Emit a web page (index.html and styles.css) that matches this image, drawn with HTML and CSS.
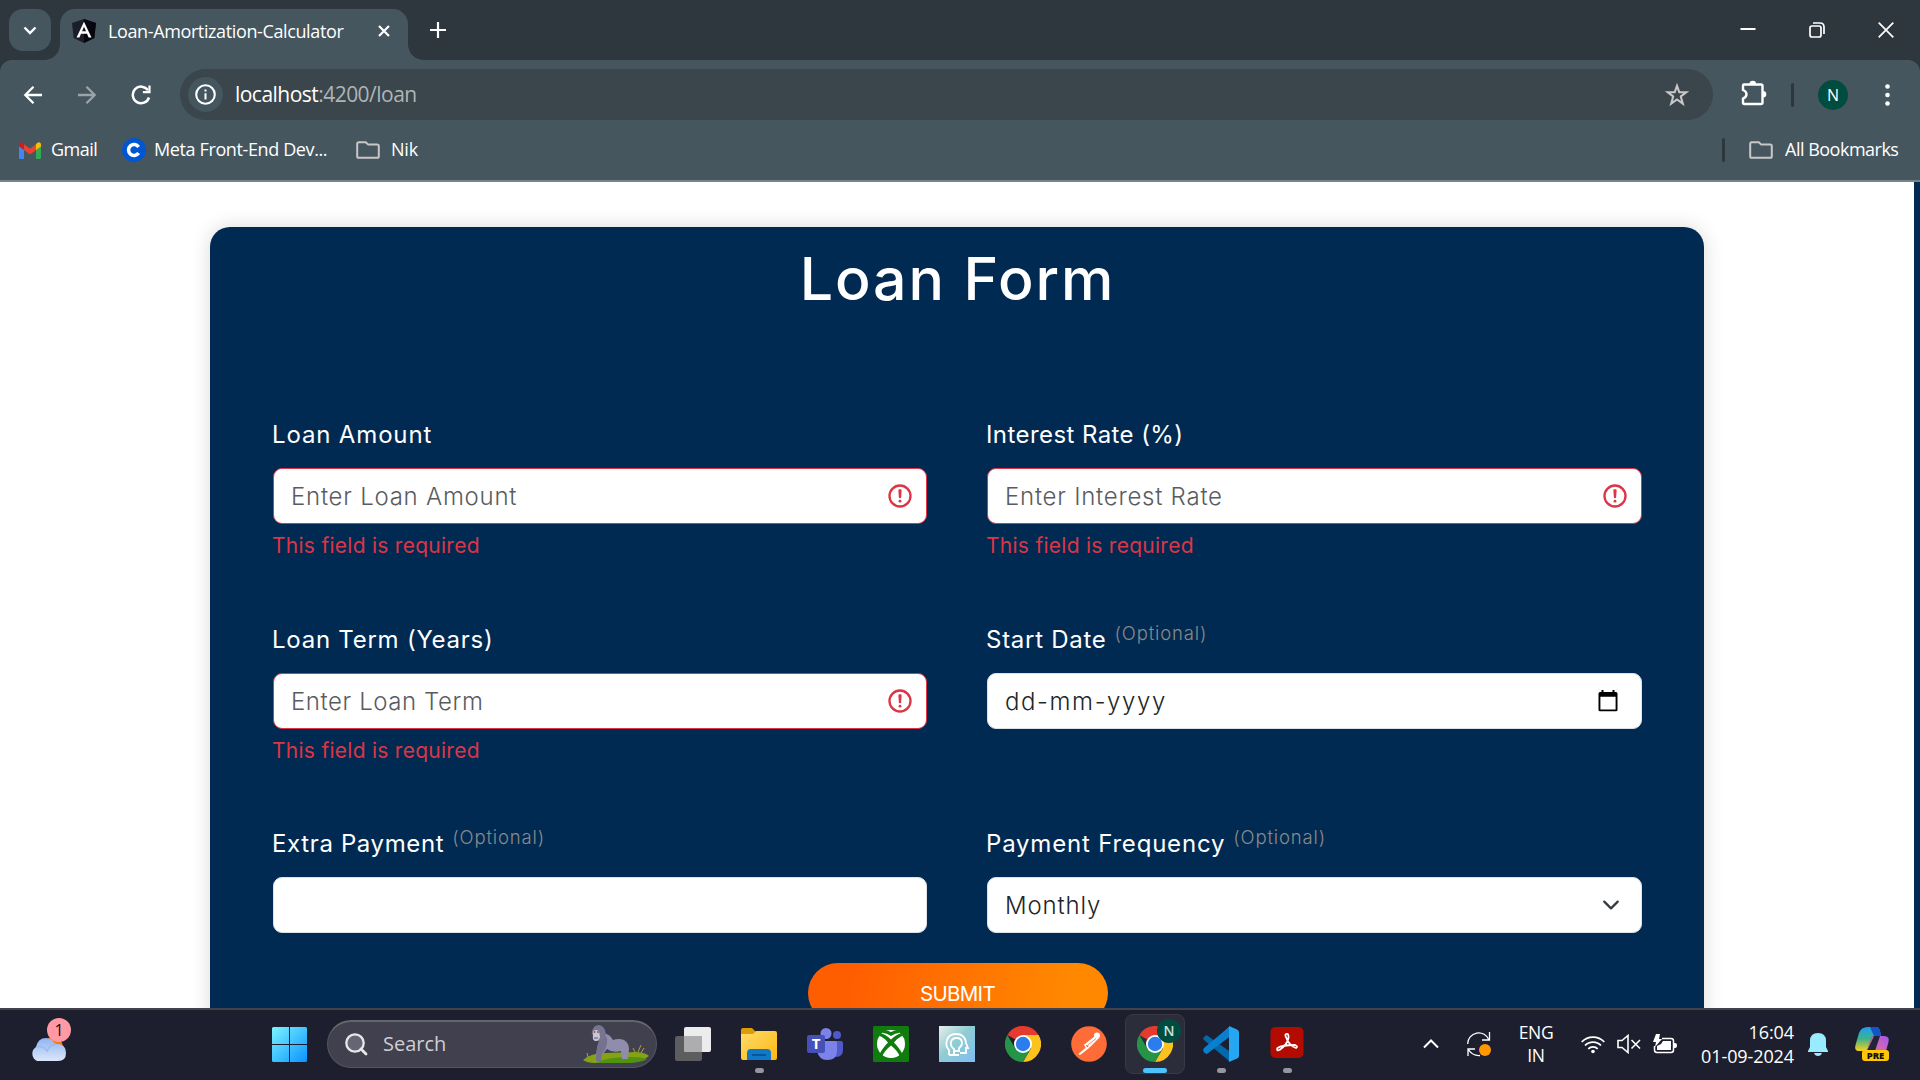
FILE: index.html
```html
<!DOCTYPE html>
<html lang="en">
<head>
<meta charset="utf-8">
<title>Loan-Amortization-Calculator</title>
<link rel="stylesheet" href="styles.css">
</head>
<body>
<svg width="0" height="0" class="defs" aria-hidden="true">
  <defs>
    <linearGradient id="win" x1="0" y1="0" x2="1" y2="1"><stop offset="0" stop-color="#7bf4ff"/><stop offset="1" stop-color="#0a93ff"/></linearGradient>
    <linearGradient id="cloud" x1="0" y1="0" x2="0" y2="1"><stop offset="0" stop-color="#8fb4f4"/><stop offset="1" stop-color="#dbe7f8"/></linearGradient>
    <linearGradient id="fold" x1="0" y1="0" x2="1" y2="1"><stop offset="0" stop-color="#ffdc6b"/><stop offset="1" stop-color="#fcb712"/></linearGradient>
    <linearGradient id="headbg" x1="0" y1="0" x2="1" y2="1"><stop offset="0" stop-color="#e9eeee"/><stop offset=".45" stop-color="#8fcdd2"/><stop offset="1" stop-color="#7fbdf5"/></linearGradient>
    <linearGradient id="copA" x1="0" y1="0" x2="0" y2="1"><stop offset="0" stop-color="#1f9df0"/><stop offset=".5" stop-color="#3fb389"/><stop offset="1" stop-color="#ffcf1a"/></linearGradient>
    <linearGradient id="copB" x1="1" y1="0" x2="0" y2="1"><stop offset="0" stop-color="#a457f0"/><stop offset="1" stop-color="#ff7a6b"/></linearGradient>
    <symbol id="chrome" viewBox="0 0 36 36">
      <path d="M18 18L2.4 9A18 18 0 0 1 33.6 9Z" fill="#e33b2e"/>
      <path d="M18 9H33.6A18 18 0 0 1 18 36L25.8 22.5Z" fill="#fcc31e"/>
      <path d="M2.4 9A18 18 0 0 0 18 36L25.8 22.5L18 24L10.2 22.5Z" fill="#269447"/>
      <circle cx="18" cy="18" r="9" fill="#fff"/><circle cx="18" cy="18" r="7.2" fill="#2b7cec"/>
    </symbol>
    <symbol id="folder" viewBox="0 0 24 18">
      <path d="M1.2 3V15.2Q1.2 16.8 2.8 16.8H21.2Q22.8 16.8 22.8 15.2V5.2Q22.8 3.6 21.2 3.6H12.2L9.8 1.2H2.8Q1.2 1.2 1.2 3Z" fill="none" stroke="#c7c7c7" stroke-width="2"/>
    </symbol>
    <symbol id="alert" viewBox="0 0 12 12">
      <g fill="none" stroke="#dc3545"><circle cx="6" cy="6" r="4.5"/><path stroke-linejoin="round" d="M5.8 3.6h.4L6 6.5z"/></g><circle cx="6" cy="8.2" r=".6" fill="#dc3545"/>
    </symbol>
  </defs>
</svg>

<header class="browser">
  <div class="titlebar">
    <button class="tab-search"><svg width="14" height="9" viewBox="0 0 14 9"><path d="M1.5 1.5L7 7L12.500 1.5" fill="none" stroke="#fff" stroke-width="2.400"/></svg></button>
    <div class="tab">
      <svg class="tab-logo" width="24" height="24" viewBox="0 0 24 24"><path d="M12 0L24 4L22.300 19L12 24L1.700 19L0 4Z" fill="#1b1d29"/><path d="M12 0L24 4L22.300 19L12 24Z" fill="#05060f"/><path d="M12 2.800L4.500 18.500H7.400L9 14.800H15L16.600 18.500H19.500ZM12 7.800L14 12.300H10Z" fill="#fff" fill-rule="evenodd"/></svg>
      <span class="tab-title">Loan-Amortization-Calculator</span>
      <svg class="tab-close" width="12" height="12" viewBox="0 0 12 12"><path d="M1 1L11 11M11 1L1 11" stroke="#fff" stroke-width="2.200"/></svg>
    </div>
    <svg class="new-tab" width="16" height="16" viewBox="0 0 16 16"><path d="M8 0V16M0 8H16" stroke="#fff" stroke-width="2.200"/></svg>
    <div class="window-buttons">
      <svg width="16" height="16" viewBox="0 0 16 16"><path d="M.5 7H15.500" stroke="#fff" stroke-width="2"/></svg>
      <svg width="16" height="16" viewBox="0 0 16 16" fill="none" stroke="#fff" stroke-width="1.700"><rect x="1" y="4" width="11" height="11" rx="2"/><path d="M4 1H11Q15 1 15 5V12"/></svg>
      <svg width="16" height="16" viewBox="0 0 16 16"><path d="M.7.7L15.300 15.300M15.300.7L.7 15.300" stroke="#fff" stroke-width="1.700"/></svg>
    </div>
  </div>
  <div class="chrome-body">
    <div class="toolbar">
      <svg class="nav" width="20" height="20" viewBox="0 0 20 20"><path d="M19 10H3M10.500 1.800L2.300 10L10.500 18.200" fill="none" stroke="#fff" stroke-width="2.300"/></svg>
      <svg class="nav nav-off" width="20" height="20" viewBox="0 0 20 20"><path d="M1 10H17M9.500 1.800L17.700 10L9.500 18.200" fill="none" stroke="#9aa4a9" stroke-width="2.300"/></svg>
      <svg class="nav" width="20" height="20" viewBox="0 0 20 20"><path d="M17 5.300A8.300 8.300 0 1 0 18 12.500" fill="none" stroke="#fff" stroke-width="2.500"/><path d="M19.600.6V8.300H11.900V6.100H17.400V.6Z" fill="#fff"/></svg>
      <div class="omnibox">
        <span class="info"><svg width="21" height="21" viewBox="0 0 21 21"><circle cx="10.500" cy="10.500" r="9.300" fill="none" stroke="#fff" stroke-width="2.100"/><path d="M10.500 9.300V15.500M10.500 5.500V7.600" stroke="#fff" stroke-width="2"/></svg></span>
        <span class="url"><b>localhost</b>:4200/loan</span>
        <svg class="star" width="24" height="24" viewBox="0 0 24 24"><path d="M12 2.800L14.300 9.300H21.200L15.800 13.500L17.800 20.600L12 16.500L6.200 20.600L8.200 13.500L2.800 9.300H9.700Z" fill="none" stroke="#c7c7c7" stroke-width="2.100"/></svg>
      </div>
      <svg class="puzzle" width="26" height="26" viewBox="0 0 26 26"><path d="M3 4.500H20Q21.500 4.500 21.500 6V22.500Q21.500 24 20 24H3.500Q2 24 2 22.500V18.500Q5.500 17 5.500 14.200Q5.500 11.500 2 10V5.500Q2 4.500 3 4.500Z" fill="none" stroke="#fff" stroke-width="2.400"/><path d="M8.500 4A3.300 3.300 0 0 1 15.100 4ZM22 11A3.300 3.300 0 0 1 22 17.600Z" fill="#fff"/></svg>
      <i class="divider"></i>
      <span class="avatar">N</span>
      <svg class="dots" width="5" height="22" viewBox="0 0 5 22" fill="#fff"><circle cx="2.500" cy="2.500" r="2.300"/><circle cx="2.500" cy="11" r="2.300"/><circle cx="2.500" cy="19.500" r="2.300"/></svg>
    </div>
    <div class="bookmarks">
      <span class="bookmark gmail"><svg width="22" height="17" viewBox="0 0 22 17"><path d="M0 3V15.500Q0 17 1.500 17H5V7Z" fill="#4285f4"/><path d="M17 7V17H20.500Q22 17 22 15.500V3Z" fill="#34a853"/><path d="M5 2.200L11 6.800L17 2.200V8L11 12.500L5 8Z" fill="#ea4335"/><path d="M0 3Q0 .3 2.300.3Q3.300.3 5 2V8L0 4.500Z" fill="#c5221f"/><path d="M22 3Q22 .3 19.700.3Q18.700.3 17 2V8L22 4.500Z" fill="#fbbc04"/></svg><span>Gmail</span></span>
      <span class="bookmark meta"><svg width="24" height="24" viewBox="0 0 24 24"><circle cx="12" cy="12" r="12" fill="#0056d2"/><path d="M16.600 8.900A5.500 5.500 0 1 0 16.600 15.100" fill="none" stroke="#fff" stroke-width="3.500"/></svg><span>Meta Front-End Dev...</span></span>
      <span class="bookmark nik"><svg width="24" height="18"><use href="#folder"/></svg><span>Nik</span></span>
      <i class="divider"></i>
      <span class="bookmark all"><svg width="24" height="18"><use href="#folder"/></svg><span>All Bookmarks</span></span>
    </div>
  </div>
</header>

<main class="page">
  <form class="card">
    <h1>Loan Form</h1>
    <div class="fields">
      <div class="field">
        <div class="label l1">Loan Amount</div>
        <div class="input invalid"><span class="ph p1">Enter Loan Amount</span><svg width="28" height="28"><use href="#alert"/></svg></div>
        <div class="error">This field is required</div>
      </div>
      <div class="field">
        <div class="label l2">Interest Rate (%)</div>
        <div class="input invalid"><span class="ph p2">Enter Interest Rate</span><svg width="28" height="28"><use href="#alert"/></svg></div>
        <div class="error">This field is required</div>
      </div>
      <div class="field">
        <div class="label l3">Loan Term (Years)</div>
        <div class="input invalid"><span class="ph p3">Enter Loan Term</span><svg width="28" height="28"><use href="#alert"/></svg></div>
        <div class="error">This field is required</div>
      </div>
      <div class="field">
        <div class="label"><span class="l4">Start Date</span><span class="optional">(Optional)</span></div>
        <div class="input"><span class="date">dd-mm-yyyy</span><svg class="calendar" width="20" height="22" viewBox="0 0 20 22"><path d="M3.500 0H5.500V2H14.500V0H16.500V2H18Q19.500 2 19.500 3.500V20Q19.500 21.300 18 21.300H2Q.5 21.300.5 20V3.500Q.5 2 2 2H3.500ZM2.400 6.800V19.400H17.600V6.800Z" fill-rule="evenodd"/></svg></div>
      </div>
      <div class="field">
        <div class="label"><span class="l5">Extra Payment</span><span class="optional">(Optional)</span></div>
        <div class="input"></div>
      </div>
      <div class="field">
        <div class="label"><span class="l6">Payment Frequency</span><span class="optional">(Optional)</span></div>
        <div class="input"><span class="month">Monthly</span><svg class="chevron" width="18" height="18" viewBox="0 0 16 16"><path d="M2 5l6 6 6-6" fill="none" stroke="#343a40" stroke-width="2" stroke-linecap="round" stroke-linejoin="round"/></svg></div>
      </div>
    </div>
    <button class="submit" type="button">SUBMIT</button>
  </form>
  <div class="scrollbar"></div>
</main>

<footer class="taskbar">
  <div class="weather">
    <svg width="36" height="30" viewBox="2 0 36 30"><circle cx="25" cy="15" r="10" fill="#f57c14"/><path d="M9 29A8 8 0 0 1 8 15Q10 6 18 6Q24 6 27 12Q38 11 38 21Q38 29 30 29Z" fill="url(#cloud)"/><path d="M8 15Q15 13 19 19Q22 12 28 12" fill="none" stroke="#9bbaf0" stroke-width="1.500"/></svg>
    <span class="count">1</span>
  </div>
  <svg class="start" width="35" height="35" viewBox="0 0 35 35"><path d="M0 1.500Q0 0 1.500 0H17V17H0ZM18 0H33.500Q35 0 35 1.500V17H18ZM0 18H17V35H1.500Q0 35 0 33.500ZM18 18H35V33.500Q35 35 33.500 35H18Z" fill="url(#win)"/></svg>
  <div class="search">
    <svg width="23" height="23" viewBox="0 0 23 23"><circle cx="10" cy="10" r="8.700" fill="#666573" stroke="#e8e8ea" stroke-width="2.300"/><path d="M16 16L21 21" stroke="#e8e8ea" stroke-width="2.800" stroke-linecap="round"/></svg>
    <span>Search</span>
    <svg class="gorilla" width="66" height="40" viewBox="0 0 66 40">
      <path d="M0 35Q8 28 22 28L54 27Q64 28 66 31Q58 38 42 38H12Q4 38 0 35Z" fill="#83a315"/><path d="M12 38Q24 32 46 32Q60 32 64 34Q58 38 42 38Z" fill="#4f930f"/><path d="M52 27L50 23M55 27L58 20M58 28L61 23M5 32L4 28" stroke="#b1a13f"/>
      <path d="M20 8Q27 9 30 15Q36 13 41 15Q46 18 46 24L45 34H39L38 26Q29 28 24 24L19 30L18 36H13Q13 26 15 19Z" fill="#8f8dab"/><path d="M20 9Q25 11 24 19Q23 24 19 29L18 36H13Q13 24 16 16Z" fill="#74728f"/><path d="M9 7Q10 0 16 0Q22 1 23 9Q22 16 15 16Q9 16 10 10Q8 9 9 7Z" fill="#777590"/><path d="M10 6Q13 4 16 6L17 12Q16 16 13 16Q9 16 10 10Z" fill="#c9c6d8"/><circle cx="11.500" cy="7" r=".9" fill="#a4442f"/><circle cx="15" cy="7" r=".9" fill="#a4442f"/><path d="M11 13H15" stroke="#5b5972"/>
    </svg>
  </div>
  <nav class="apps">
    <div class="app"><svg width="36" height="36" viewBox="0 0 36 36"><rect x="0" y="10" width="27" height="25" rx="2" fill="#5d5d5f"/><rect x="9" y="1" width="27" height="25" rx="2" fill="#ececed"/><path d="M9 10H27V26H11Q9 26 9 24Z" fill="#adadb0"/></svg></div>
    <div class="app run"><svg width="36" height="36" viewBox="0 0 36 36"><path d="M0 4Q0 2 2 2H11L15 6V12H0Z" fill="#dd9b06"/><path d="M0 8H12L15 5H34Q36 5 36 7V32Q36 34 34 34H2Q0 34 0 32Z" fill="url(#fold)"/><path d="M6 34V27Q6 23 10 23H26Q30 23 30 27V34Z" fill="#0f78c9"/><path d="M11 29H25" stroke="#064f8c" stroke-width="1.600"/></svg></div>
    <div class="app"><svg width="36" height="36" viewBox="0 0 36 36"><circle cx="30" cy="9" r="4" fill="#5059c9"/><path d="M24 15H34Q36 15 36 17V24Q36 31 29 31H24Z" fill="#5059c9"/><circle cx="19" cy="7.500" r="5.500" fill="#7b83eb"/><path d="M10 15H28Q30 15 30 17V25Q30 34 20 34Q12 34 10 25Z" fill="#7b83eb"/><rect x="0" y="9" width="18" height="18" rx="2" fill="#4650b8"/><text x="9" y="23" class="teams-t">T</text></svg></div>
    <div class="app"><svg width="36" height="36" viewBox="0 0 36 36"><rect width="36" height="36" rx="1.500" fill="#107c10"/><circle cx="18" cy="18" r="14" fill="#fff"/><path d="M9 7Q13 6.500 18 10Q23 6.500 27 7L24 4.800Q21 4.500 18 6Q15 4.500 12 4.800Z" fill="#107c10"/><path d="M8 7.500Q12 8 18 13.500Q24 8 28 7.500L30 10Q26 10.500 21 16.500Q28 24 29.500 28.500L27 31Q25 25 18 19.500Q11 25 9 31L6.500 28.500Q8 24 15 16.500Q10 10.500 6 10Z" fill="#107c10"/></svg></div>
    <div class="app"><svg width="36" height="36" viewBox="0 0 36 36"><rect width="36" height="36" fill="url(#headbg)"/><path d="M10 29V24Q6 20 8 14Q10 8 17 8Q26 8 27 17L29 22H27V27H21M15 28V23Q11 20 12 16Q13 12 17.500 12Q23 12 23 17Q23 20 20 22V25H15M10 29H20" fill="none" stroke="#fff" stroke-width="1.800"/></svg></div>
    <div class="app"><svg width="36" height="36"><use href="#chrome"/></svg></div>
    <div class="app"><svg width="36" height="36" viewBox="0 0 36 36"><circle cx="18" cy="18" r="17.800" fill="#ff6c37"/><circle cx="26" cy="9.500" r="3" fill="#fff"/><path d="M23 12L14 19L15.500 22L8.500 28M25 13L17 22L9 28" fill="none" stroke="#fff" stroke-width="1.600" stroke-linecap="round"/><path d="M23 11L28 12L19 21L15 18Z" fill="#fff"/><path d="M17 19L25 12.500" stroke="#ff6c37" stroke-width=".8"/></svg></div>
    <div class="app active"><svg width="36" height="36"><use href="#chrome"/></svg><span class="profile">N</span></div>
    <div class="app run"><svg width="36" height="36" viewBox="0 0 36 36"><path d="M26 1L3 22Q0 24 1 26L3.500 28L26 11Z" fill="#0a7fcd"/><path d="M3.500 9L1 11Q-.5 12.500 1 14L26 35V25Z" fill="#0069ad"/><path d="M1 22L26 1V11L5 27Q3 28.500 1 26Q-.5 24 1 22Z" fill="#0a7fcd"/><path d="M26 0L34 3.500Q36 4.500 36 6V30Q36 31.500 34 32.500L26 36Z" fill="#25a7f3"/></svg></div>
    <div class="app run"><svg width="36" height="36" viewBox="0 0 36 36"><rect x="1.500" y="1" width="33" height="31" rx="5" fill="#b30b00"/><path d="M17 8Q20 7 19.500 12Q18 19 10.500 24Q7 25 8.500 22Q13 19 26 19Q29.500 20.500 27 22Q20 20 16.500 10Q16 8.500 17 8Z" fill="none" stroke="#fff" stroke-width="1.800"/></svg></div>
  </nav>
  <div class="tray">
    <svg class="caret" width="16" height="10" viewBox="0 0 16 10"><path d="M1 8.500L8 1.500L15 8.500" fill="none" stroke="#fff" stroke-width="2"/></svg>
    <svg class="sync" width="24" height="25" viewBox="0 0 24 25"><g fill="none" stroke="#fff" stroke-width="1.300"><path d="M.7 12A11 11 0 0 1 22 8M22.500 0V8H15M1 24V17H8M1 17Q5 24 13 23.500"/></g><circle cx="18" cy="18" r="6" fill="#ff9800"/></svg>
    <div class="lang"><span>ENG</span><span>IN</span></div>
    <svg class="wifi" width="24" height="19" viewBox="0 0 24 19" fill="none" stroke="#fff" stroke-width="1.800"><path d="M.7 7A15.500 15.500 0 0 1 23.300 7M4 10.500A11 11 0 0 1 20 10.500M7.300 13.800A6.500 6.500 0 0 1 16.700 13.800"/><circle cx="12" cy="16.500" r="1.800" fill="#fff" stroke="none"/></svg>
    <svg class="speaker" width="24" height="20" viewBox="0 0 24 20" fill="none" stroke="#fff" stroke-width="1.600"><path d="M1 6.500H5L11 1.500V18.500L5 13.500H1ZM14.500 6L23 14.500M23 6L14.500 14.500"/></svg>
    <svg class="battery" width="24" height="20" viewBox="0 0 24 20"><path d="M9 4.500H18Q20.500 4.500 20.500 7V16Q20.500 18.500 18 18.500H4Q1.500 18.500 1.500 16V12" fill="none" stroke="#fff" stroke-width="1.500"/><path d="M10 7H18V16H4V12L8 10ZM21 9H22Q24 9 24 11V12Q24 14 22 14H21ZM3 0L0 8H3L2 13L9 5H6L7 0Z" fill="#fff"/></svg>
    <div class="clock"><span>16:04</span><span>01-09-2024</span></div>
    <svg class="bell" width="20" height="23" viewBox="0 0 20 23"><path d="M2 8Q2 0 10 0Q18 0 18 8V14L20 18V19H0V18L2 14ZM6 20H14Q13 23 10 23Q7 23 6 20Z" fill="#99ebff"/></svg>
    <div class="copilot">
      <svg width="36" height="36" viewBox="0 0 36 36"><path d="M14 1H22Q25 1 26 5L27 10H20Q18 10 17 13L14 22Q13 25 9 25H5Q0 25 1.500 19L5 7Q7 1 14 1Z" fill="url(#copA)"/><path d="M16 1H22Q25 1 26 5L27 10H20Z" fill="#1652c9"/><path d="M27 10H30Q36 10 34.500 16L32 25Q30 31 23 31H15Q12 31 11 27L10 25Q13 25 14 22L17 13Q18 10 20 10Z" fill="url(#copB)"/><path d="M20 10H26L21 25H13Z" fill="#23233a"/></svg>
      <span>PRE</span>
    </div>
  </div>
</footer>
</body>
</html>
```
FILE: styles.css
```css
* { box-sizing: border-box; }
body {
  margin: 0;
  width: 1920px;
  height: 1080px;
  overflow: hidden;
  display: flex;
  flex-direction: column;
  background: #fff;
  font-family: "Open Sans", "Noto Sans", sans-serif;
}
svg { display: block; flex: none; }
button { border: 0; padding: 0; font: inherit; }
.defs { position: absolute; }

/* browser window */
.browser { flex: none; height: 182px; background: #2d373d; color: #fff; }
.titlebar { height: 60px; display: flex; align-items: flex-start; padding: 9px 26px 0 9px; }
.tab-search { width: 42px; height: 42px; border-radius: 14px; background: #45565f; display: flex; align-items: center; justify-content: center; }
.tab {
  position: relative;
  width: 348px;
  height: 51px;
  margin-left: 9px;
  padding: 0 18px 8px 12px;
  background: #45565f;
  border-radius: 15px 15px 0 0;
  display: flex;
  align-items: center;
}
.tab::before, .tab::after { content: ""; position: absolute; bottom: 0; width: 15px; height: 15px; }
.tab::before { left: -15px; background: radial-gradient(circle at 0 0, transparent 14.5px, #45565f 15px); }
.tab::after { right: -15px; background: radial-gradient(circle at 100% 0, transparent 14.5px, #45565f 15px); }
.tab-title { margin-left: 12px; font-size: 18px; letter-spacing: -.38px; white-space: nowrap; line-height: 24px; }
.tab-close { margin-left: auto; }
.new-tab { margin: 13px 0 0 22px; }
.window-buttons { margin: 13px 0 0 auto; display: flex; gap: 53px; }
.chrome-body { height: 122px; background: #45565f; border-radius: 12px 12px 0 0; border-bottom: 2px solid #75858b; padding-top: 9px; }
.toolbar { height: 51px; display: flex; align-items: center; padding: 0 30px 0 23px; }
.nav { margin-right: 34px; }
.nav:nth-child(3) { margin-right: 29px; }
.omnibox { width: 1533px; height: 51px; border-radius: 26px; background: #3a454c; display: flex; align-items: center; padding: 0 24px 0 8px; }
.info { width: 35px; height: 35px; border-radius: 50%; background: #45565f; display: flex; align-items: center; justify-content: center; }
.url { margin-left: 12px; padding-bottom: 1px; font-size: 21px; color: #aeb5b8; letter-spacing: -.53px; }
.url b { font-weight: 400; color: #fff; }
.star { margin-left: auto; }
.puzzle { margin-left: 28px; margin-top: -3px; }
.toolbar .divider { margin-left: 24px; }
.divider { width: 3px; height: 24px; border-radius: 2px; background: #2d373d; }
.avatar { margin-left: 24px; width: 30px; height: 30px; border-radius: 50%; background: #004d40; font-size: 16px; line-height: 30px; text-align: center; }
.dots { margin-left: auto; }
.bookmarks { height: 60px; display: flex; align-items: center; padding: 0 21px 0 19px; }
.bookmark { display: flex; align-items: center; gap: 11px; font-size: 18px; white-space: nowrap; }
.bookmark span { padding-bottom: 2px; }
.gmail { width: 103px; letter-spacing: -.5px; gap: 10px; }
.meta { width: 234px; letter-spacing: -.38px; gap: 8px; }
.nik { gap: 11px; letter-spacing: -.2px; }
.bookmarks .divider { margin-left: auto; }
.all { margin-left: 24px; width: 150px; gap: 12px; letter-spacing: -.5px; }

/* page */
.page { flex: none; position: relative; height: 826px; overflow: hidden; background: #fff; padding: 45px 0 0 210px; font-family: Inter, sans-serif; }
.scrollbar { position: absolute; top: 0; right: 0; width: 6px; height: 100%; background: #002a52; }
.card { width: 1494px; height: 900px; padding: 20px 62px 0 63px; border-radius: 20px; background: #002a52; box-shadow: 0 0 20px rgba(0, 0, 0, .15); color: #fff; display: flex; flex-direction: column; align-items: center; }
h1 { margin: 0; height: 64px; line-height: 64px; font-size: 59px; font-weight: 500; letter-spacing: 1.9px; white-space: nowrap; }
.fields { margin-top: 106px; width: 100%; display: grid; grid-template-columns: 654px 655px; column-gap: 60px; grid-template-rows: 205px 204px 137px; }
.label { height: 36px; line-height: 36px; margin-left: -1px; font-size: 24px; display: flex; white-space: nowrap; }
.l1 { letter-spacing: .85px; }
.l2 { letter-spacing: .42px; }
.l3 { letter-spacing: .75px; }
.l4 { letter-spacing: .73px; }
.l5 { letter-spacing: .63px; }
.l6 { letter-spacing: .8px; }
.optional { margin: -7px 0 0 8px; font-size: 18.500px; font-weight: 300; letter-spacing: .85px; color: #8a8a8a; }
.input { margin-top: 15px; height: 56px; border: 1px solid #dee2e6; border-radius: 9px; background: #fff; color: #212529; padding: 0 12px 0 17px; display: flex; align-items: center; justify-content: space-between; font-size: 24px; font-weight: 300; }
.invalid { border-color: #dc3545; }
.ph { color: #595c5f; }
.p1, .p2 { letter-spacing: .75px; }
.p3 { letter-spacing: .58px; }
.date { letter-spacing: 1.6px; }
.month { letter-spacing: .85px; }
.calendar { margin-right: 11px; }
.chevron { margin-right: 9px; }
.error { margin: 7px 0 0 -1px; height: 30px; line-height: 30px; font-size: 21px; letter-spacing: .27px; color: #dc3545; }
.submit { width: 300px; height: 60px; flex: none; border-radius: 30px; background: linear-gradient(100deg, #ff5e00 15%, #ff8800 85%); color: #fff; font-size: 20.500px; letter-spacing: -.7px; }

/* taskbar */
.taskbar { flex: none; height: 72px; padding-bottom: 2px; border-top: 2px solid #42424d; background: #1e1f2e; color: #fff; display: flex; align-items: center; }
.weather { position: relative; margin: 5px 0 0 30px; }
.count { position: absolute; left: 17px; top: -14px; width: 24px; height: 24px; border-radius: 50%; background: #ff99a4; color: #111; font-size: 16px; line-height: 24px; text-align: center; }
.start { margin-left: 206px; }
.search { margin-left: 20px; width: 330px; height: 48px; border-radius: 24px; background: #41404e; border: 1px solid #55545f; border-top: 2px solid #65646f; display: flex; align-items: center; padding: 0 7px 0 17px; font-size: 20px; color: #cfcfd4; }
.search span { margin-left: 15px; padding-bottom: 2px; }
.gorilla { margin-left: auto; }
.apps { margin-left: 3px; display: flex; }
.app { position: relative; width: 66px; height: 60px; display: flex; align-items: center; justify-content: center; }
.run::after, .active::after { content: ""; position: absolute; bottom: 1px; left: 50%; width: 9px; height: 5px; margin-left: -4px; border-radius: 3px; background: #96969e; }
.active { width: 60px; margin: 0 3px; border-radius: 8px; background: #2c2d3b; border: 1px solid #383945; }
.active::after { width: 24px; margin-left: -12px; bottom: 0; background: #4cc2ff; }
.profile { position: absolute; left: 31px; top: 4px; width: 24px; height: 24px; border-radius: 50%; background: #004d40; color: #cde0dc; font-size: 14px; line-height: 24px; text-align: center; font-weight: 600; }
.teams-t { font: bold 15px "Open Sans", sans-serif; fill: #fff; text-anchor: middle; }
.tray { margin-left: 103px; display: flex; align-items: center; }
.sync { margin-left: 28px; }
.lang { margin-left: 22px; width: 46px; text-align: center; }
.lang span, .clock span { display: block; font-size: 17.500px; line-height: 24px; letter-spacing: -.4px; }
.lang span { line-height: 23px; }
.clock span { font-size: 18px; letter-spacing: -.1px; }
.wifi { margin-left: 22px; }
.speaker { margin-left: 12px; }
.battery { margin-left: 12px; }
.clock { margin-left: 17px; width: 100px; text-align: right; }
.bell { margin-left: 14px; }
.copilot { position: relative; margin-left: 26px; }
.copilot span { position: absolute; left: 8px; top: 24px; width: 27px; height: 11px; border-radius: 3px; background: #ffc60a; color: #111; font-size: 9.500px; line-height: 11px; font-weight: 800; text-align: center; }
```
